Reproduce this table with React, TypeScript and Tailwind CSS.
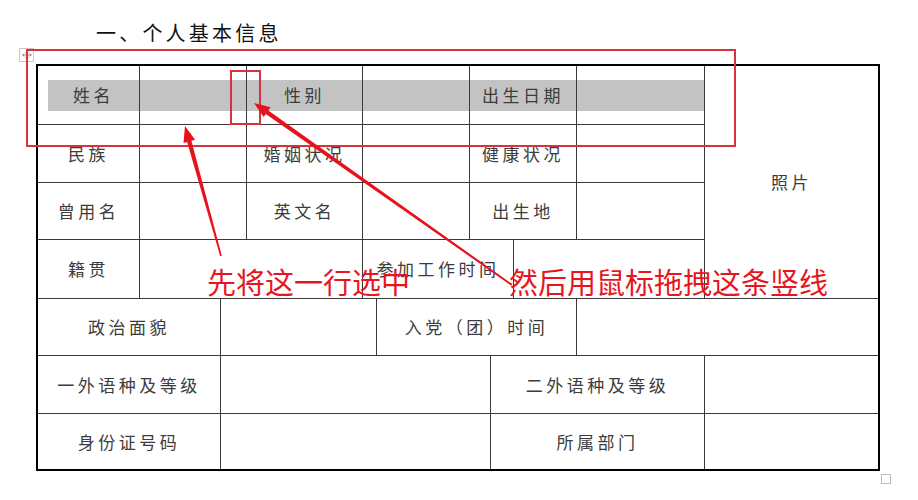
import { Move } from 'lucide-react';

const cjk = { fontFamily: '"Noto Sans CJK SC", "Noto Sans", sans-serif' };

type Cell = { text?: string; c: string; hi?: boolean; first?: boolean };

// grid lines: 1=36 2=139 3=220 4=246 5=362 6=376 7=469 8=490 9=513 10=576 11=704 12=880
const cells: Cell[] = [
  { text: '姓名', c: 'col-start-1 col-end-2 row-start-1', hi: true, first: true },
  { c: 'col-start-2 col-end-4 row-start-1', hi: true },
  { text: '性别', c: 'col-start-4 col-end-5 row-start-1', hi: true },
  { c: 'col-start-5 col-end-7 row-start-1', hi: true },
  { text: '出生日期', c: 'col-start-7 col-end-10 row-start-1', hi: true },
  { c: 'col-start-10 col-end-11 row-start-1', hi: true },
  { text: '照片', c: 'col-start-11 col-end-12 row-start-1 row-end-5' },

  { text: '民族', c: 'col-start-1 col-end-2 row-start-2' },
  { c: 'col-start-2 col-end-4 row-start-2' },
  { text: '婚姻状况', c: 'col-start-4 col-end-5 row-start-2' },
  { c: 'col-start-5 col-end-7 row-start-2' },
  { text: '健康状况', c: 'col-start-7 col-end-10 row-start-2' },
  { c: 'col-start-10 col-end-11 row-start-2' },

  { text: '曾用名', c: 'col-start-1 col-end-2 row-start-3' },
  { c: 'col-start-2 col-end-4 row-start-3' },
  { text: '英文名', c: 'col-start-4 col-end-5 row-start-3' },
  { c: 'col-start-5 col-end-7 row-start-3' },
  { text: '出生地', c: 'col-start-7 col-end-10 row-start-3' },
  { c: 'col-start-10 col-end-11 row-start-3' },

  { text: '籍贯', c: 'col-start-1 col-end-2 row-start-4' },
  { c: 'col-start-2 col-end-5 row-start-4' },
  { text: '参加工作时间', c: 'col-start-5 col-end-9 row-start-4' },
  { c: 'col-start-9 col-end-11 row-start-4' },

  { text: '政治面貌', c: 'col-start-1 col-end-3 row-start-5' },
  { c: 'col-start-3 col-end-6 row-start-5' },
  { text: '入党（团）时间', c: 'col-start-6 col-end-10 row-start-5' },
  { c: 'col-start-10 col-end-12 row-start-5' },

  { text: '一外语种及等级', c: 'col-start-1 col-end-3 row-start-6' },
  { c: 'col-start-3 col-end-8 row-start-6' },
  { text: '二外语种及等级', c: 'col-start-8 col-end-11 row-start-6' },
  { c: 'col-start-11 col-end-12 row-start-6' },

  { text: '身份证号码', c: 'col-start-1 col-end-3 row-start-7' },
  { c: 'col-start-3 col-end-8 row-start-7' },
  { text: '所属部门', c: 'col-start-8 col-end-11 row-start-7' },
  { c: 'col-start-11 col-end-12 row-start-7' },
];

// tapered arrow: thin tail, thicker near the head, filled triangle tip
function arrowPoints(x1: number, y1: number, x2: number, y2: number) {
  const dx = x2 - x1;
  const dy = y2 - y1;
  const len = Math.hypot(dx, dy);
  const ux = dx / len;
  const uy = dy / len;
  const nx = -uy;
  const ny = ux;
  const head = 16;
  const hw = 6;
  const bx = x2 - ux * head;
  const by = y2 - uy * head;
  const tw = 0.8;
  const sw = 2.2;
  const p = (x: number, y: number) => `${x.toFixed(1)},${y.toFixed(1)}`;
  return [
    p(x1 + nx * tw, y1 + ny * tw),
    p(bx + nx * sw, by + ny * sw),
    p(bx + nx * hw, by + ny * hw),
    p(x2, y2),
    p(bx - nx * hw, by - ny * hw),
    p(bx - nx * sw, by - ny * sw),
    p(x1 - nx * tw, y1 - ny * tw),
  ].join(' ');
}

export default function App() {
  return (
    <div className="relative w-[918px] h-[500px] bg-white overflow-hidden" style={cjk}>
      <div className="h-[64px] flex items-center pl-[96px] pt-[2px] text-[20px] tracking-[3.2px] text-[#111]">
        一、个人基本信息
      </div>

      <div className="ml-[36px] w-[844px] border-2 border-black bg-[#3a3a3a] grid gap-px grid-cols-[101px_80px_25px_115px_13px_92px_20px_22px_62px_127px_173px] grid-rows-[58px_57px_56px_58px_56px_57px_55px]">
        {cells.map((cell, i) => (
          <div key={i} className={`${cell.c} bg-white flex items-center`}>
            {cell.hi ? (
              <div
                className={`h-[31px] flex-1 bg-[#c3c3c3] flex items-center justify-center text-[17px] tracking-[3.5px] text-[#3c3c3c] ${
                  cell.first ? 'ml-[10px]' : ''
                }`}
              >
                {cell.text}
              </div>
            ) : (
              <div className="flex-1 text-center text-[17px] tracking-[3.5px] text-[#3c3c3c]">{cell.text}</div>
            )}
          </div>
        ))}
      </div>

      {/* table move handle */}
      <div className="absolute left-[19px] top-[48px] w-[15px] h-[14px] border border-[#c8c8c8] bg-white flex items-center justify-center">
        <Move size={10} strokeWidth={1.5} color="#555" />
      </div>
      {/* table resize handle */}
      <div className="absolute left-[881px] top-[474px] w-[10px] h-[10px] border border-[#bdbdbd]" />

      {/* annotation boxes */}
      <div className="absolute left-[26px] top-[49px] w-[710px] h-[98px] border-2 border-[#d6343c]" />
      <div className="absolute left-[230px] top-[70px] w-[31px] h-[55px] border-2 border-[#d6343c]" />

      <svg className="absolute left-0 top-0" width="918" height="500" viewBox="0 0 918 500">
        <polygon points={arrowPoints(221, 256, 185, 126)} fill="#e8121c" />
        <polygon points={arrowPoints(512, 285, 254, 103)} fill="#e8121c" />
      </svg>

      <div className="absolute left-[207px] top-[265px] text-[29px] leading-[32px] text-[#e8151f] whitespace-nowrap">
        先将这一行选中
      </div>
      <div className="absolute left-[509px] top-[265px] text-[29px] leading-[32px] text-[#e8151f] whitespace-nowrap">
        然后用鼠标拖拽这条竖线
      </div>
    </div>
  );
}
